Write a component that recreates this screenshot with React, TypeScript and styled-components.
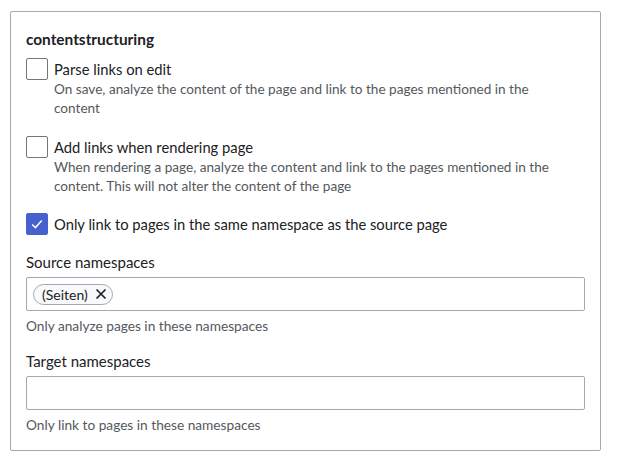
import styled, { createGlobalStyle } from 'styled-components';

const GlobalStyle = createGlobalStyle`
  html, body {
    margin: 0;
    padding: 0;
    background: #fff;
  }
  body {
    font-family: Lato, 'Open Sans', sans-serif;
    color: #202122;
  }
`;

const Page = styled.div`
  padding: 11px 16px 11px 10px;
`;

const Panel = styled.fieldset`
  margin: 0;
  width: 591px;
  box-sizing: border-box;
  border: 1px solid #a2a9b1;
  border-radius: 2px;
  padding: 17px 15px 15px 15px;
  display: flex;
  flex-direction: column;
`;

const Title = styled.div`
  font-size: 15.4px;
  font-weight: 700;
  line-height: 20px;
  margin-bottom: 9px;
`;

const CheckRow = styled.label<{ $gap?: number }>`
  display: flex;
  align-items: flex-start;
  gap: 6px;
  margin-bottom: ${(p) => p.$gap ?? 18}px;
`;

const Box = styled.span<{ $checked?: boolean }>`
  flex: none;
  width: 22px;
  height: 22px;
  box-sizing: border-box;
  border-radius: 2px;
  border: 1px solid ${(p) => (p.$checked ? '#4660d0' : '#72777d')};
  background: ${(p) => (p.$checked ? '#4660d0' : '#fff')};
  display: flex;
  align-items: center;
  justify-content: center;
`;

const CheckText = styled.div`
  display: flex;
  flex-direction: column;
  max-width: 505px;
`;

const CheckLabel = styled.span`
  font-size: 14.75px;
  line-height: 22px;
`;

const Desc = styled.span`
  font-size: 13.6px;
  line-height: 19px;
  color: #54595d;
`;

const FieldLabel = styled.div`
  font-size: 15px;
  line-height: 22px;
  margin-bottom: 4px;
`;

const Input = styled.div`
  height: 34px;
  box-sizing: border-box;
  border: 1px solid #a2a9b1;
  border-radius: 2px;
  display: flex;
  align-items: center;
  padding: 0 6px;
`;

const Chip = styled.span`
  display: inline-flex;
  align-items: center;
  gap: 7px;
  height: 21px;
  box-sizing: border-box;
  padding: 0 5px 0 8px;
  border: 1px solid #a2a9b1;
  border-radius: 11px;
  background: #f8f9fa;
  font-size: 14px;
  color: #202122;
`;

const Help = styled.div<{ $gap?: number }>`
  font-size: 13.7px;
  line-height: 20px;
  color: #54595d;
  margin-top: 5px;
  margin-bottom: ${(p) => p.$gap ?? 0}px;
`;

const Check = () => (
  <svg width="16" height="16" viewBox="0 0 20 20">
    <path d="M4 10.5l4 4 8-9" fill="none" stroke="#fff" strokeWidth="1.8" />
  </svg>
);

const Cross = () => (
  <svg width="12" height="12" viewBox="0 0 12 12">
    <path d="M1.5 1.5l9 9M10.5 1.5l-9 9" stroke="#202122" strokeWidth="1.7" />
  </svg>
);

export default function App() {
  return (
    <Page>
      <GlobalStyle />
      <Panel>
        <Title>contentstructuring</Title>
        <CheckRow>
          <Box />
          <CheckText>
            <CheckLabel>Parse links on edit</CheckLabel>
            <Desc>
              On save, analyze the content of the page and link to the pages mentioned in the
              content
            </Desc>
          </CheckText>
        </CheckRow>
        <CheckRow $gap={17}>
          <Box />
          <CheckText>
            <CheckLabel>Add links when rendering page</CheckLabel>
            <Desc>
              When rendering a page, analyze the content and link to the pages mentioned in the
              content. This will not alter the content of the page
            </Desc>
          </CheckText>
        </CheckRow>
        <CheckRow $gap={16}>
          <Box $checked>
            <Check />
          </Box>
          <CheckText>
            <CheckLabel>Only link to pages in the same namespace as the source page</CheckLabel>
          </CheckText>
        </CheckRow>
        <FieldLabel>Source namespaces</FieldLabel>
        <Input>
          <Chip>
            (Seiten)
            <Cross />
          </Chip>
        </Input>
        <Help $gap={14}>Only analyze pages in these namespaces</Help>
        <FieldLabel>Target namespaces</FieldLabel>
        <Input />
        <Help>Only link to pages in these namespaces</Help>
      </Panel>
    </Page>
  );
}
